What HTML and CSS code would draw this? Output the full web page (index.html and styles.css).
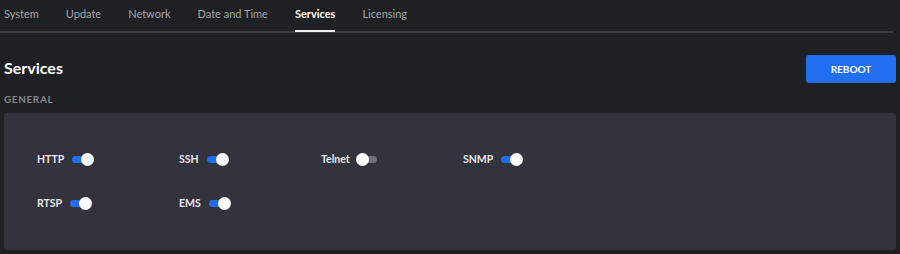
FILE: index.html
```html
<!DOCTYPE html>
<html lang="en">
<head>
    <meta charset="UTF-8">
    <meta name="viewport" content="width=device-width, initial-scale=1.0">
    <title>Services</title>
    <link rel="stylesheet" href="styles.css">
</head>
<body>
    <nav class="tabs">
        <a class="tab">System</a>
        <a class="tab">Update</a>
        <a class="tab">Network</a>
        <a class="tab">Date and Time</a>
        <a class="tab active">Services</a>
        <a class="tab">Licensing</a>
    </nav>

    <div class="page-header">
        <h1>Services</h1>
        <button class="reboot-button">REBOOT</button>
    </div>

    <div class="section-title">GENERAL</div>

    <div class="panel">
        <div class="services">
            <label class="service"><span>HTTP</span><span class="switch on"></span></label>
            <label class="service"><span>SSH</span><span class="switch on"></span></label>
            <label class="service"><span>Telnet</span><span class="switch"></span></label>
            <label class="service"><span>SNMP</span><span class="switch on"></span></label>
            <label class="service"><span>RTSP</span><span class="switch on"></span></label>
            <label class="service"><span>EMS</span><span class="switch on"></span></label>
        </div>
    </div>
</body>
</html>
```

FILE: styles.css
```css
body {
    margin: 0;
    padding: 0 4px;
    background-color: #1f2023;
    color: #e6e6e8;
    font-family: 'Lato', 'Open Sans', sans-serif;
    height: 254px;
    overflow: hidden;
}

.tabs {
    display: flex;
    height: 31px;
    margin-left: -4px;
    margin-right: 3px;
    border-bottom: 2px solid #3c3d43;
}

.tab {
    position: relative;
    margin-right: 27px;
    padding-top: 7px;
    font-size: 11px;
    color: #a3a5ab;
    cursor: pointer;
}

.tab:first-child {
    margin-left: 4px;
}

.tab.active {
    color: #ffffff;
    font-weight: bold;
}

.tab.active::after {
    content: "";
    position: absolute;
    left: 0;
    right: 0;
    bottom: -1px;
    height: 2px;
    background-color: #f2f2f2;
}

.page-header {
    display: flex;
    justify-content: space-between;
    align-items: center;
    margin-top: 22px;
}

.page-header h1 {
    margin: 0 0 4px;
    font-size: 16px;
    font-weight: bold;
    color: #ffffff;
}

.reboot-button {
    width: 90px;
    height: 28px;
    border: none;
    border-radius: 3px;
    background-color: #1f6ff0;
    color: #ffffff;
    font-family: inherit;
    font-size: 10px;
    font-weight: bold;
    cursor: pointer;
}

.section-title {
    margin-top: 10px;
    font-size: 10px;
    font-weight: bold;
    letter-spacing: 0.6px;
    color: #85878d;
}

.panel {
    margin-top: 8px;
    height: 137px;
    border-radius: 3px;
    background-color: #32333d;
    box-sizing: border-box;
    padding: 40px 0 0 33px;
}

.services {
    display: grid;
    grid-template-columns: repeat(4, 142px);
    row-gap: 32px;
}

.service {
    display: flex;
    align-items: center;
    gap: 8px;
    font-size: 10.5px;
    font-weight: bold;
    color: #e8e8ea;
}

.switch {
    position: relative;
    width: 19px;
    height: 7px;
    border-radius: 4px;
    background-color: #6e6f79;
}

.switch::after {
    content: "";
    position: absolute;
    top: -3px;
    left: -2px;
    width: 13px;
    height: 13px;
    border-radius: 50%;
    background-color: #ffffff;
}

.switch.on {
    background-color: #1f6ff0;
}

.switch.on::after {
    left: 9px;
}
```
